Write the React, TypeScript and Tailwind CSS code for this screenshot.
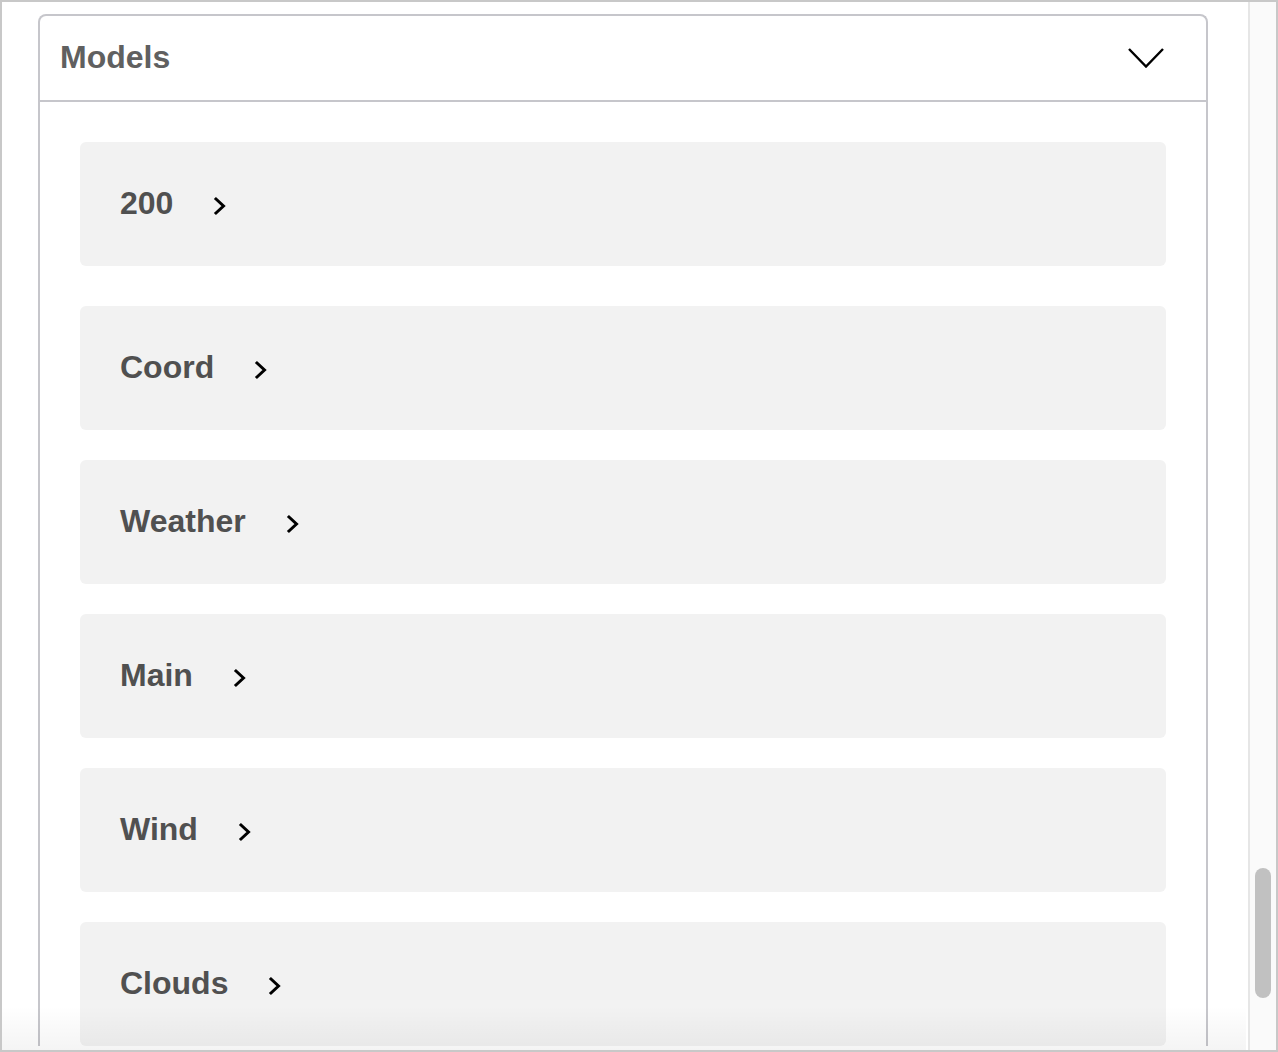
import React from "react";

const models: string[] = ["200", "Coord", "Weather", "Main", "Wind", "Clouds"];

const ArrowRight = () => (
  <svg width="14" height="20" viewBox="0 0 14 20" className="mt-[3px] shrink-0">
    <polyline
      points="3,3 10.5,10 3,17"
      fill="none"
      stroke="#000"
      strokeWidth="3"
      strokeLinecap="square"
    />
  </svg>
);

const ArrowDown = () => (
  <svg width="40" height="24" viewBox="0 0 40 24" className="shrink-0">
    <polyline
      points="3,3 20,20.5 37,3"
      fill="none"
      stroke="#000"
      strokeWidth="2.4"
    />
  </svg>
);

const ModelRow = ({ name, first }: { name: string; first: boolean }) => {
  return (
    <div
      className={`flex h-[124px] items-center rounded-[6px] bg-[#f2f2f2] px-10 ${
        first ? "mb-10" : "mb-[30px]"
      }`}
    >
      <span className="mb-[3px] text-[32px] font-bold leading-none text-[#505050]">{name}</span>
      <span className="ml-[40px]">
        <ArrowRight />
      </span>
    </div>
  );
};

const App = () => {
  return (
    <div
      className="relative flex h-[1052px] w-[1278px] overflow-hidden border-2 border-[#c8c8c8] bg-white"
      style={{ fontFamily: '"Liberation Sans", Arial, Helvetica, sans-serif' }}
    >
      <div className="flex-1 overflow-hidden pl-9 pr-10 pt-3">
        <section className="rounded-t-[8px] border-2 border-b-0 border-[#c6c6cb]">
          <div className="flex h-[86px] items-center justify-between border-b-2 border-[#c6c6cb] pl-5 pr-10">
            <h4 className="mb-[3px] text-[32px] font-bold leading-none text-[#606060]">Models</h4>
            <ArrowDown />
          </div>
          <div className="px-10 pt-10">
            {models.map((m, i) => (
              <ModelRow key={m} name={m} first={i === 0} />
            ))}
          </div>
        </section>
      </div>

      {/* scrollbar */}
      <div className="flex w-[28px] shrink-0 justify-center border-l-2 border-[#e6e6e6] bg-[#fafafa]">
        <div className="mt-[866px] h-[130px] w-4 rounded-full bg-[#c1c1c1]" />
      </div>

      <div className="pointer-events-none absolute bottom-0 left-0 right-[30px] h-[44px] bg-gradient-to-b from-transparent to-[rgba(0,0,0,0.045)]" />
    </div>
  );
};

export default App;
